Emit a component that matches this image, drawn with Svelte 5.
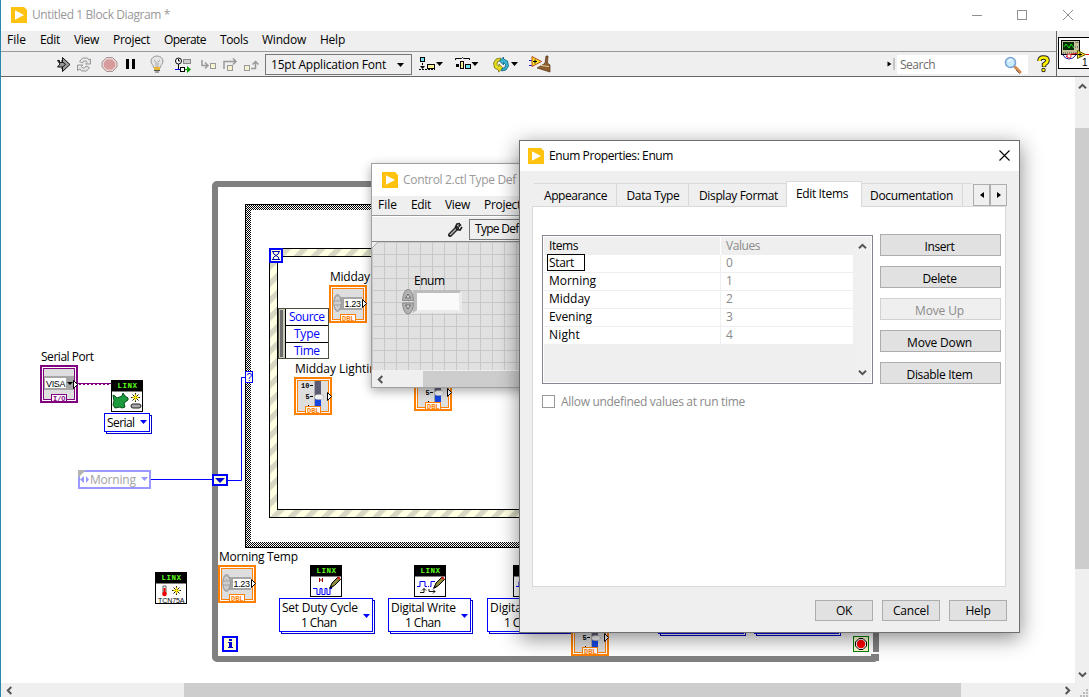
<script>
  const menus = [
    ['File', 19, 33], ['Edit', 20, 34], ['View', 25, 39], ['Project', 37, 51],
    ['Operate', 42, 56], ['Tools', 28, 42], ['Window', 44, 58], ['Help', 25, 40],
  ];
  const items = [['Start', 25], ['Morning', 47], ['Midday', 41], ['Evening', 43], ['Night', 31]];
  const actions = [['Insert', 30], ['Delete', 34], ['Move Up', 49], ['Move Down', 65], ['Disable Item', 66]];

  // Spreads the letters of a label over a given advance width.
  function fit(node, width) {
    const now = node.getBoundingClientRect().width;
    node.style.letterSpacing = (width - now) / node.textContent.length + 'px';
  }
</script>

{#snippet logo()}
  <svg class="logo" width="16" height="16" viewBox="0 0 16 16">
    <path d="M0 0H13L16 3V16H0Z" fill="#ffc20e" />
    <path d="M4 3.2 13 8 4 12.8Z" fill="#fff" />
  </svg>
{/snippet}

{#snippet chevron(dir)}
  <svg width="9" height="9" viewBox="0 0 9 9">
    <path
      d="M1 6.3 4.5 2.8 8 6.3"
      fill="none" stroke="#555" stroke-width="2"
      transform="rotate({{ up: 0, right: 90, down: 180, left: 270 }[dir]} 4.5 4.5)"
    />
  </svg>
{/snippet}

{#snippet terminal(x, y, color, tag)}
  <rect x={x} y={y} width="38" height="38" fill={color} />
  <rect x={x + 2} y={y + 2} width="34" height="34" fill="#fff" />
  <rect x={x + 3.5} y={y + 3.5} width="31" height="31" fill="#dedede" stroke={color} />
  <rect x={x + 11.5} y={y + 29.5} width="15" height="7" fill="#fff" stroke={color} />
  <text class="pix" x={x + 13} y={y + 35.5} font-size="7" fill={color} textLength="12.5">{tag}</text>
{/snippet}

{#snippet outArrow(x, y)}
  <path d="M{x} {y}V{y + 8}L{x + 4} {y + 4}Z" fill="#fff" stroke="#000" />
{/snippet}

{#snippet numeric(x, y)}
  {@render terminal(x, y, '#ff8000', 'DBL')}
  <rect x={x + 11} y={y + 12} width="22" height="13" fill="#a6a6a6" />
  <rect x={x + 15} y={y + 14} width="18" height="9" fill="#fff" />
  <ellipse cx={x + 8.5} cy={y + 18} rx="3.7" ry="8.5" fill="#b8b8b8" stroke="#9a9a9a" />
  <path d="M{x + 6.5} {y + 15}l2-3 2 3M{x + 6.5} {y + 21}l2 3 2-3M{x + 5} {y + 18}h7" fill="none" stroke="#e4e4e4" />
  <text class="num" x={x + 15.5} y={y + 22} font-size="9" textLength="16.5">1.23</text>
  {@render outArrow(x + 33.5, y + 14.5)}
{/snippet}

{#snippet slider(x, y)}
  {@render terminal(x, y, '#ff8000', 'DBL')}
  <rect x={x + 20} y={y + 4} width="1" height="25" fill="#aaa" />
  <rect x={x + 21} y={y + 4} width="6" height="25" fill="#5c5c74" />
  <rect x={x + 21} y={y + 20} width="6" height="9" fill="#1747e0" />
  <ellipse cx={x + 25} cy={y + 20} rx="4.5" ry="2.6" fill="#f4f4f4" stroke="#aaa" stroke-width=".6" />
  <path d="M{x + 16} {y + 8.5}h3M{x + 16} {y + 19.5}h3M{x + 14} {y + 28.5}h1" stroke="#000" />
  <text class="pix" x={x + 7} y={y + 11} font-size="7" fill="#000" textLength="8.5">10</text>
  <text class="pix" x={x + 11.5} y={y + 22} font-size="7" fill="#000">5</text>
  {@render outArrow(x + 33.5, y + 15.5)}
{/snippet}

{#snippet linx(x, y)}
  <rect x={x + 0.5} y={y + 0.5} width="31" height="31" fill="#fff" stroke="#000" />
  <rect x={x} y={y} width="32" height="11.5" fill="#000" />
  <text class="pix" x={x + 6.5} y={y + 8} font-size="7.5" fill="#5cff1a" textLength="19.500">LINX</text>
{/snippet}

{#snippet spark(x, y)}
  <path d="M{x} {y - 4.5}v9M{x - 4.5} {y}h9M{x - 3} {y - 3}l6 6M{x + 3} {y - 3}l-6 6" stroke="#000" stroke-width=".9" />
  <path d="M{x} {y - 3}v6M{x - 3} {y}h6" stroke="#ffe500" stroke-width="1.6" />
{/snippet}

{#snippet pencil(x, y)}
  <path d="M{x + 20} {y + 23}l2-5 6-6 2.5 2.5-6 6Z" fill="#8c8c3c" stroke="#000" />
  <path d="M{x + 27} {y + 13}l2-1.5 1.5 2-1.5 1.5Z" fill="#d01818" />
  <path d="M{x + 19} {y + 24}l1.5-3.5 2 2Z" />
{/snippet}

{#snippet ring(x, y, w, h, ax, ay)}
  <rect x={x + 2.5} y={y + 2.5} width={w} height={h} fill="#fff" stroke="#00c" />
  <rect x={x + 0.5} y={y + 0.5} width={w} height={h} fill="#fff" stroke="#00f" />
  <path d="M{ax} {ay}h7l-3.5 4Z" fill="#00f" />
{/snippet}

<div class="app">
  <header class="titlebar">
    {@render logo()}
    <span class="dim" use:fit={138}>Untitled 1 Block Diagram *</span>
    <svg class="wincontrols" width="104" height="14" viewBox="970 7 104 14" fill="none" stroke="#8f8f8f">
      <path d="M972 14.5h10" />
      <rect x="1017.5" y="9.5" width="9" height="9" />
      <path d="m1063 9 10 10m0-10-10 10" />
    </svg>
  </header>

  <div class="top">
    <div class="bars">
      <nav class="menu">
        {#each menus as [name, w, step]}
          <div class="entry" style:width="{step}px"><span use:fit={w}>{name}</span></div>
        {/each}
      </nav>
      <div class="toolbar">
        <svg viewBox="56 53 20 23">
          <path d="M57.500 60.500h2v2h3v-5l7.500 7-7.500 7v-4.500h-5l2.500-3Z" fill="#999" stroke="#111" />
          <path d="M61 60.500l4.500 4-4.500 4" fill="none" stroke="#111" />
        </svg>
        <svg viewBox="76 53 25 23" fill="#e6e6e6" stroke="#969696">
          <path d="M79.500 61.500l3-3.500h5l1.500 2 1.500-1v5h-5l1.500-1.500-1-1.500h-2l-1.500 2Z" />
          <path d="M89.500 67.500l-3 3.500h-5l-1.500-2-2.500 1.500v-5.500h5.500l-1.500 1.500 1 1.500h2l1.500-2Z" />
        </svg>
        <svg viewBox="101 53 24 23">
          <path d="M106.500 57.500h6l4.500 4.500v5l-4.500 4.500h-6l-4.500-4.500v-5Z" fill="#e6d0d0" stroke="#a89494" />
          <path d="M107 59.500h5l3 3v4l-3 3h-5l-3-3v-4Z" fill="#d89b9b" />
        </svg>
        <svg viewBox="125 53 24 23"><path d="M126 59h3v10h-3zM132 59h3v10h-3z" /></svg>
        <svg viewBox="149 53 26 23">
          <path d="M153.500 67.500c0-3-2.500-3-2.500-6.500a6 5 0 0 1 12 0c0 3.500-2.500 3.500-2.500 6.500Z" fill="#e4e4e4" stroke="#9a9a9a" />
          <path d="M156 67v-5l-2-2m4 7v-5l2-2" fill="none" stroke="#aaa" />
          <path d="M154 67h6v3h-6z" fill="#e5b638" />
          <path d="M154 70.500h6M155 72h4" stroke="#555" />
        </svg>
        <svg viewBox="175 53 25 23">
          <circle cx="178.500" cy="61" r="3" fill="#fff" stroke="#000" />
          <path d="M178.500 59v2h1.500M178.500 64v5" fill="none" stroke="#000" />
          <rect x="183.500" y="59.500" width="7" height="4" fill="#ccc" stroke="#888" />
          <path d="M175 69.500h5" stroke="#00f" />
          <rect x="180.500" y="67.500" width="4" height="4" fill="#fff" stroke="#000" />
          <path d="M185 69.500h3" stroke="#00a000" /><path d="m187 66 4 3.500-4 3.500Z" fill="#009b00" />
        </svg>
        <svg viewBox="200 53 22 23" fill="none" stroke="#999" stroke-width="1.500">
          <path d="M202 60v5.500h6m-3-3 3 3-3 3" /><rect x="210.500" y="63.500" width="5" height="5" fill="#f4f2cf" stroke-width="1" />
        </svg>
        <svg viewBox="222 53 21 23" fill="none" stroke="#999" stroke-width="1.500">
          <path d="M224 69v-7.500h12m-3-3 3 3-3 3" /><rect x="227.500" y="65.500" width="5" height="5" fill="#f4f2cf" stroke-width="1" />
        </svg>
        <svg viewBox="243 53 22 23" fill="none" stroke="#999" stroke-width="1.500">
          <rect x="244.500" y="65.500" width="5" height="5" fill="#f4f2cf" stroke-width="1" /><path d="M251 68.500h4.500v-7m-3 3 3-3 3 3" />
        </svg>
        <div class="font">
          <span use:fit={115}>15pt Application Font</span>
          <svg class="caret" width="7" height="4"><path d="M0 0h7l-3.500 4Z" /></svg>
        </div>
        <svg viewBox="419 53 36 23">
          <rect x="420.500" y="57.500" width="4" height="4" fill="#6fe4f0" stroke="#000" />
          <path d="M422.500 63v5M419 69.500h5m1 0h10" stroke="#000" stroke-dasharray="2 1" /><path d="M420 66h5l-2.500 3Z" />
          <rect x="427.500" y="64.500" width="7" height="4" fill="#f6ee92" stroke="#000" />
          <path d="M436 62h7l-3.500 4Z" />
        </svg>
        <svg viewBox="455 53 38 23">
          <path d="M455.500 60v-1.500h6l1-1 1 1h6V60" fill="none" stroke="#000" />
          <rect x="456" y="64" width="3" height="3" /><rect x="460.500" y="61.500" width="3" height="7" fill="#f6ee92" stroke="#000" />
          <rect x="465.500" y="64.500" width="5" height="4" fill="#6fe4f0" stroke="#000" />
          <path d="M471.500 62h7l-3.500 4Z" />
        </svg>
        <svg viewBox="493 53 36 23">
          <path d="m500.500 58-4.500 1-2.500 4 1 5 4 2v2l4.500-4-4-4v2.500l-2-2 .5-3 3-1Z" fill="#e2dc1e" stroke="#77720c" stroke-width=".8" />
          <path d="m501.500 71 4.500-1 2.500-4-1-5-4-2v-2l-4 4 4 4v-2.500l2 2-.5 3-3 1Z" fill="#36b3cf" stroke="#145f78" stroke-width=".8" />
          <path d="M511 62h7l-3.500 4Z" />
        </svg>
        <svg class="cleanup" viewBox="529 53 26 23">
          <path d="M529 60.500h4m-4 5h4" stroke="#22c" /><path d="m532 56.500 9.500 5-9.500 5Z" fill="#ffe82a" stroke="#b84b16" />
          <path d="M533 61.500h4m-2-2v4" stroke="#000" />
          <path d="M546 56h2l-.5 7 2.500 2v7l-13-4 7-4 1-1Z" fill="#8c5d2c" stroke="#59371a" stroke-width=".7" /><path d="M541 65.500l8 1" stroke="#e6cf9b" />
        </svg>
        <svg class="search-edge" viewBox="886 53 10 23"><path d="m887 61.500 4 2.500-4 2.500Z" /><path d="M893.500 58v12" stroke="#999" /></svg>
        <div class="search">
          <span use:fit={35}>Search</span>
          <svg width="18" height="18" viewBox="1004 55 18 18">
            <path d="m1015 66 5 5" stroke="#d08a4b" stroke-width="3" stroke-linecap="round" /><path d="m1016 69 3.500 3.500" stroke="#6d5b66" />
            <circle cx="1010.500" cy="61.500" r="5" fill="#c9ebfb" stroke="#7aa5d6" stroke-width="1.600" /><path d="M1008 61q1-3 4-2.500" stroke="#fff" fill="none" />
          </svg>
        </div>
        <svg class="help" viewBox="1036 53 16 23" fill="none">
          <path d="M1039.500 61q0-3.500 4-3.500t4 3q0 2-3.500 4V67" stroke="#222" stroke-width="4.500" />
          <circle cx="1043.500" cy="70" r="2.200" fill="#222" />
          <path d="M1039.500 61q0-3.500 4-3.500t4 3q0 2-3.500 4V66.500" stroke="#fff200" stroke-width="2.600" />
          <circle cx="1043.500" cy="70" r="1.300" fill="#fff200" />
        </svg>
      </div>
    </div>
    <div class="vi">
      <svg width="32" height="45" viewBox="1057 31 32 45">
        <rect x="1058.500" y="37.500" width="34" height="31" fill="#fff" stroke="#000" />
        <rect x="1061.500" y="40.500" width="18" height="14" fill="#c6c39c" stroke="#000" />
        <rect x="1063" y="42" width="11" height="8" fill="#052b05" />
        <path d="m1064 47 2-3 3 4 2-4 3 4" fill="none" stroke="#1be01b" />
        <path d="M1076 42v2m2-2v2m-3 3h3M1063 53h13" stroke="#444" stroke-dasharray="1 1" />
        <path d="M1063 55q2 4 6 4t7-4" fill="none" stroke="#2020b0" /><path d="M1066 57q3-3 6-3t5-1m7 1.500h5" fill="none" stroke="#f01010" />
        <circle cx="1069" cy="56" r="2" fill="#fff" stroke="#e22" />
        <path d="m1077.500 50.500 8 4-8 4Z" fill="#ffe72a" stroke="#665c00" />
        <path d="M1078 54.500h4m-2-2v4" stroke="#000" />
        <text class="num" x="1082" y="66" font-size="10">1</text>
      </svg>
    </div>
  </div>

  <main class="work">
    <div class="canvas">
      <svg class="diagram" width="1074" height="606" viewBox="1 77 1074 606">
        <defs>
          <pattern id="check" width="2" height="2" patternUnits="userSpaceOnUse" shape-rendering="crispEdges">
            <rect width="2" height="2" fill="#fff" /><path d="M0 0h1v1h-1zM1 1h1v1h-1z" />
          </pattern>
          <pattern id="stripe" width="12" height="12" patternUnits="userSpaceOnUse" patternTransform="translate(278 0) rotate(45)">
            <rect width="12" height="12" fill="#ffffe1" /><rect width="5.500" height="12" fill="#d7d7c3" />
          </pattern>
        </defs>

        <rect x="215" y="184" width="661" height="475" rx="2" fill="none" stroke="#808080" stroke-width="6" />
        <path d="M873 652h6v2h-6zM877 661h2v1h-2z" fill="#fff" />
        <path d="M871 654h8v7h-8z" fill="#808080" />

        <rect x="248" y="207" width="420" height="338" fill="none" stroke="url(#check)" stroke-width="6" />
        <rect x="245.500" y="204.500" width="425" height="343" fill="none" stroke="#000" />

        <rect x="273.500" y="252.500" width="380" height="261" fill="none" stroke="url(#stripe)" stroke-width="8" />
        <rect x="269.500" y="248.500" width="388" height="269" fill="none" stroke="#000" />
        <rect x="277.500" y="256.500" width="372" height="253" fill="none" stroke="#000" />
        <rect x="270" y="249" width="12" height="13" fill="#ffffe1" stroke="#00f" stroke-width="2" />
        <path d="M272 251.500h8m-8 8h8m-7-8q0 3 3 4q3-1 3-4m-6 8q0-3 3-4q3 1 3 4" fill="none" stroke="#0000b0" />

        <path d="M151 479.500h61M228 480.500h13.500V377.500h4" fill="none" stroke="#00f" />
        <rect x="213" y="475" width="14" height="10" fill="#ffffd5" stroke="#00f" stroke-width="2" />
        <path d="M215 478h10l-5 5Z" fill="#0000d8" />
        <rect x="245.500" y="371.500" width="7" height="11" fill="#ffffe1" stroke="#00f" />
        <text class="num" x="246.500" y="381" font-size="10" fill="#00f">?</text>

        <rect x="278.500" y="308.500" width="50" height="50" fill="#fff" stroke="#4d4d3c" />
        <rect x="279" y="309" width="7" height="49" fill="#c9c9ba" /><rect x="280" y="310" width="3" height="47" fill="#6d6d6d" />
        <path d="M285.500 309v49M286 325.500h42M286 342.500h42" stroke="#000" />
        <g fill="#00f">
          <text x="289" y="321" textLength="36">Source</text>
          <text x="294" y="338" textLength="26">Type</text>
          <text x="294" y="355" textLength="26">Time</text>
        </g>

        <text x="330" y="281" textLength="40">Midday</text>
        <text x="295" y="373" textLength="88">Midday Lighting</text>
        {@render numeric(329, 285)}
        {@render slider(294, 377)}
        {@render slider(414, 373)}

        <text x="41" y="361" textLength="53">Serial Port</text>
        {@render terminal(40, 365, '#800080', 'I/O')}
        <rect x="44" y="376" width="30" height="14" fill="#a6a6a6" />
        <rect x="45" y="378" width="21" height="10" fill="#fff" />
        <text class="num" x="46" y="386.500" font-size="9" textLength="19.500" fill="#000">VISA</text>
        <path d="M67 382h6l-3 3Z" />
        {@render outArrow(73.5, 380.5)}
        <path d="M78 383.500h33" stroke="#800080" stroke-width="1" /><path d="M79 384.500h32" stroke="#800080" stroke-dasharray="2 2" />

        {@render linx(111, 380)}
        <path d="m113 395 2 1 2 2 5-2 1-3 2 3 3 2v2l-4 3 1 4-3 1-2-1-5 1-2-3 1-4Z" fill="#1b9a3e" stroke="#084d1a" />
        {@render spark(135.5, 397.5)}
        <rect x="131" y="404" width="10" height="4" rx="2" fill="#aaa" stroke="#222" />
        {@render ring(104, 413, 45, 18, 140, 420)}
        <text x="107" y="427" textLength="28">Serial</text>

        <rect x="79" y="471" width="71" height="17" fill="#fff" stroke="#99f" stroke-width="2" />
        <path d="M78 470h8l-8 8Z" fill="#b3b3b3" />
        <path d="M84 476v7l-4-3.500ZM86 476v7l3-3.500Z" fill="#99f" /><path d="M141 477h7l-3.500 4Z" fill="#99f" />
        <text x="90" y="484" textLength="46" fill="#a3a3a3">Morning</text>

        {@render linx(155, 572)}
        <rect x="163" y="586" width="3" height="7" fill="#fff" stroke="#000" stroke-width=".6" /><path d="M164.500 588v7" stroke="#e00" stroke-width="2" /><circle cx="164.500" cy="594" r="2.300" fill="#e00" />
        {@render spark(176.5, 590.5)}
        <text class="num" x="158" y="602.500" font-size="7" fill="#000" textLength="26.500">TCN75A</text>

        <text x="219" y="561" textLength="79">Morning Temp</text>
        {@render numeric(218, 565)}

        {@render linx(310, 565)}
        <path d="M313 588.500h4v6h3v-6h2v6h3v-6h2v6h3v-6h2" stroke="#00f" fill="none" />
        <path d="M319.500 578v4m3-4v4m-3-2h3" stroke="#900" />
        {@render pencil(310, 565)}
        {@render ring(279, 598, 93, 33, 363, 614)}
        <text x="282" y="612" textLength="76">Set Duty Cycle</text>
        <text x="301" y="627" textLength="36">1 Chan</text>

        {@render linx(414, 565)}
        <path d="M417 586.500h3v-5h5v5h2m1 0h1m1 0h1v-5h4" stroke="#00f" fill="none" />
        <path d="M420 592.500h4v-4m-2 2 2-2 2 2M429 589v2.500h6m-2-2 2 2-2 2" stroke="#111" fill="none" />
        {@render pencil(414, 565)}
        {@render ring(388, 598, 82, 33, 461, 614)}
        <text x="391" y="612" textLength="65">Digital Write</text>
        <text x="405" y="627" textLength="36">1 Chan</text>

        {@render linx(513, 565)}
        <path d="M516 586.500h3v-5h5" stroke="#00f" fill="none" />
        {@render ring(487, 598, 86, 33, 561, 614)}
        <text x="490" y="612" textLength="66">Digital Read</text>
        <text x="504" y="627" textLength="36">1 Chan</text>

        {@render slider(571, 618)}
        {@render ring(658, 600, 85, 33, 730, 616)}
        {@render ring(754, 600, 84, 33, 828, 616)}

        <rect x="223" y="637" width="14" height="14" fill="#ffffd5" stroke="#00f" stroke-width="2" />
        <path d="M229 639h3v2h-3zM228 642h4v6h-3v-5h-1zM228 647h5v1h-5z" fill="#0000d0" />
        <rect x="853.500" y="636.500" width="15" height="15" fill="#ffffd5" stroke="#008000" />
        <path d="M859 638.500h4l3.500 3.500v4l-3.500 3.500h-4l-3.500-3.500v-4Z" fill="#fff" stroke="#000" /><circle cx="861" cy="644" r="4.200" fill="#f00" />
      </svg>

      <section class="window control">
        <header class="wtitle">{@render logo()}<span class="dim" use:fit={113}>Control 2.ctl Type Def</span></header>
        <nav class="menu">
          {#each menus.slice(0, 4) as [name, w, step]}
            <div class="entry" style:width="{step}px"><span use:fit={w}>{name}</span></div>
          {/each}
        </nav>
        <div class="ctools">
          <svg width="15" height="15" viewBox="448 222 15 15">
            <path d="m450 235 7-7" stroke="#222" stroke-width="4" stroke-linecap="round" /><path d="m450 235 7-7" stroke="#bbb" stroke-width="1.500" />
            <path d="M460 223.500l-3 .5-1.500 3 1.500 2.500 3 .5 2-3M458.500 226.500l2.500-2" fill="none" stroke="#222" stroke-width="1.700" />
          </svg>
          <div class="tdef"><span use:fit={46}>Type Def.</span></div>
        </div>
        <div class="panel">
          <svg width="200" height="128" viewBox="372 242 200 128">
            <path d="M372 242h6l-6 6Z" fill="#eee" /><path d="m372 248 6-6" stroke="#aaa" />
            <text x="414" y="285" textLength="31">Enum</text>
            <rect x="413" y="290" width="49" height="23" fill="#ebebeb" />
            <path d="M413 290h49l-3 3h-42v17l-4 3Z" fill="#bdbdbd" />
            <rect x="417" y="293" width="42" height="17" fill="#fafafa" />
            <path d="M402.500 300.500q1-11 5.500-11t5.500 11ZM402.500 303q1 11 5.500 11t5.500-11Z" fill="#b2b2b2" stroke="#8a8a8a" />
            <path d="M405.500 298h5l-2.500-4ZM405.500 305h5l-2.500 4Z" fill="#ddd" stroke="#555" stroke-width=".8" />
          </svg>
        </div>
        <div class="cscroll"><div class="cbtn">{@render chevron('left')}</div><div class="cthumb"></div></div>
      </section>

      <section class="window dialog">
        <header class="dtitle">
          {@render logo()}<span use:fit={124}>Enum Properties: Enum</span>
          <svg class="close" width="11" height="11" viewBox="0 0 11 11"><path d="m.5.5 10 10m0-10-10 10" stroke="#000" stroke-width="1.100" /></svg>
        </header>
        <div class="dbody">
          <div class="tabs">
            <div class="tab t1"><span use:fit={63}>Appearance</span></div>
            <div class="tab t2"><span use:fit={53}>Data Type</span></div>
            <div class="tab t3"><span use:fit={79}>Display Format</span></div>
            <div class="tab active"><span use:fit={52}>Edit Items</span></div>
            <div class="tab t5"><span use:fit={83}>Documentation</span></div>
            <div class="tab rest"></div>
            <div class="spin"><svg width="4" height="6"><path d="M4 0v6L0 3Z" /></svg></div>
            <div class="spin second"><svg width="4" height="6"><path d="M0 0v6l4-3Z" /></svg></div>
          </div>
          <div class="page">
            <div class="editor">
              <div class="list">
                <div class="grid">
                  <div class="row head"><div class="c1"><span use:fit={29}>Items</span></div><div class="c2"><span use:fit={34}>Values</span></div></div>
                  {#each items as [name, w], i}
                    <div class="row">
                      <div class="c1" class:edit={i === 0}><span use:fit={w}>{name}</span></div>
                      <div class="c2">{i}</div>
                    </div>
                  {/each}
                </div>
                <div class="lscroll">{@render chevron('up')}{@render chevron('down')}</div>
              </div>
              <div class="actions">
                {#each actions as [name, w]}
                  <button disabled={name === 'Move Up'}><span use:fit={w}>{name}</span></button>
                {/each}
              </div>
            </div>
            <div class="allow"><i class="box"></i><span use:fit={184}>Allow undefined values at run time</span></div>
          </div>
          <footer>
            <button><span use:fit={16}>OK</span></button>
            <button><span use:fit={36}>Cancel</span></button>
            <button><span use:fit={25}>Help</span></button>
          </footer>
        </div>
      </section>
    </div>
    <div class="vscroll"><div class="vup">{@render chevron('up')}</div><div class="vthumb"></div><div class="vdown">{@render chevron('down')}</div></div>
  </main>
  <div class="hscroll">
    <div class="hleft">{@render chevron('left')}</div>
    <div class="hthumb"></div>
    <div class="hright">{@render chevron('right')}</div>
    <svg width="9" height="9"><path d="M6 0h2v2H6zM3 3h2v2H3zM6 3h2v2H6zM0 6h2v2H0zM3 6h2v2H3zM6 6h2v2H6z" fill="#bbb" /></svg>
  </div>
</div>

<style>
  :global(body) { margin: 0; overflow: hidden; }
  .app {
    box-sizing: border-box; width: 1089px; height: 697px; overflow: hidden;
    display: flex; flex-direction: column;
    border-left: 1px solid #2b87ad; background: #fff;
    font: 12px/16px "Open Sans", "Noto Sans", sans-serif; color: #000; white-space: nowrap;
  }
  svg { display: block; flex: none; }
  .pix { font-family: "Liberation Mono", monospace; font-weight: bold; }
  .num { font-family: "Liberation Sans", sans-serif; }
  .dim { color: #999; }

  .titlebar { height: 31px; flex: none; display: flex; align-items: center; padding: 0 15px 2px 10px; box-sizing: border-box; }
  .logo { margin-right: 5px; }
  .wincontrols { margin-left: auto; }

  .top { display: flex; flex: none; height: 46px; box-sizing: border-box; background: #efefef; border-bottom: 1px solid #666; }
  .bars { width: 1055px; border-right: 1px solid #666; }
  .menu { display: flex; height: 20px; padding-left: 6px; border-bottom: 1px solid #999; background: #efefef; line-height: 18px; }
  .toolbar {
    height: 23px; margin-top: 1px; padding-left: 55px; display: grid; align-items: start;
    grid-template-columns: 20px 25px 24px 24px 26px 25px 22px 21px 22px 154px 36px 38px 36px 357px 11px 139px 16px;
  }
  .toolbar > svg { height: 23px; width: 100%; }
  .toolbar > .cleanup { width: 26px; }
  .font {
    box-sizing: border-box; width: 147px; height: 21px; margin-top: 1px; padding: 0 7px 0 5px;
    border: 1px solid #777; display: flex; align-items: center; justify-content: space-between; line-height: 18px;
  }
  .search {
    box-sizing: border-box; width: 131px; height: 19px; margin-top: 2px; padding: 0 6px 0 3px; background: #fff; color: #6d6d6d;
    display: flex; justify-content: space-between; align-items: center;
  }
  .vi { width: 32px; background: #efefef; }

  .work { display: flex; height: 606px; flex: none; }
  .canvas { position: relative; width: 1074px; overflow: hidden; background: #fff; }
  .vscroll { width: 14px; background: #efefef; display: flex; flex-direction: column; align-items: center; }
  .vup { height: 51px; padding-top: 5px; box-sizing: border-box; }
  .vthumb { width: 14px; height: 441px; background: #cdcdcd; }
  .vdown { margin-top: 101px; }
  .hscroll { height: 14px; flex: none; display: flex; align-items: center; background: #efefef; }
  .hleft { box-sizing: border-box; width: 183px; flex: none; padding-left: 4px; }
  .hthumb { width: 777px; flex: none; height: 14px; background: #cdcdcd; }
  .hright { box-sizing: border-box; width: 117px; flex: none; padding-left: 102px; }
  .hscroll > svg { margin: 6px 0 0 2px; }

  .window { position: absolute; box-sizing: border-box; background: #efefef; }
  .control { left: 370px; top: 86px; width: 220px; height: 225px; border: 1px solid #a0a0a0; box-shadow: 0 3px 10px #0005; display: flex; flex-direction: column; }
  .wtitle { height: 32px; display: flex; align-items: center; background: #fff; padding-left: 10px; box-sizing: border-box; }
  .control .menu { height: 19px; line-height: 18px; }
  .ctools { height: 26px; box-sizing: border-box; padding-left: 76px; display: flex; align-items: center; gap: 6px; border-bottom: 1px solid #888; border-top: 1px solid #fff; }
  .tdef { width: 100px; height: 19px; border: 1px solid #777; padding-left: 5px; line-height: 18px; flex: none; }
  .panel {
    height: 128px; overflow: hidden; background-color: #e1e1e1;
    background-image: linear-gradient(90deg, #c8c8c8 1px, transparent 1px), linear-gradient(#c8c8c8 1px, transparent 1px);
    background-size: 12px 12px; background-position: 0 0;
  }
  .cscroll { height: 16px; display: flex; margin-top: auto; }
  .cbtn { width: 51px; padding: 4px 0 0 4px; box-sizing: border-box; }
  .cthumb { flex: 1; background: #cdcdcd; }

  .dialog { left: 518px; top: 63px; width: 501px; height: 493px; border: 1px solid #6e6e6e; box-shadow: 0 5px 20px #0007; display: flex; flex-direction: column; }
  .dtitle { height: 30px; flex: none; display: flex; align-items: center; background: #fff; padding: 0 9px 0 8px; }
  .close { margin: -2px 0 0 auto; }
  .dbody { padding: 10px 13px 0 12px; }
  .tabs { display: flex; align-items: flex-end; height: 26px; padding-left: 2px; margin-right: -1px; }
  .tab { box-sizing: border-box; height: 23px; border-top: 1px solid #d9d9d9; border-right: 1px solid #d9d9d9; line-height: 23px; text-align: center; margin-bottom: 1px; }
  .t1 { width: 83px; padding-left: 1px; }
  .t2 { width: 72px; padding-left: 1px; }
  .t3 { width: 97px; border-right: 0; padding-left: 2px; }
  .active { width: 76px; height: 26px; margin-bottom: 0; background: #fff; border-left: 1px solid #d9d9d9; padding-right: 4px; position: relative; z-index: 1; line-height: 23px; }
  .t5 { width: 101px; padding-right: 1px; }
  .rest { width: 9px; border-right: 0; }
  .spin { box-sizing: border-box; width: 17px; height: 22px; margin: 0 0 1px 1px; border: 1px solid #adadad; display: grid; place-items: center; }
  .second { margin-left: 0; }
  .page { box-sizing: border-box; height: 381px; border: 1px solid #d9d9d9; background: #fff; margin-top: -1px; padding: 27px 4px 0 9px; }
  .editor { display: flex; justify-content: space-between; }
  .list { box-sizing: border-box; width: 331px; height: 149px; margin-top: 1px; border: 1px solid #828790; padding: 1px; display: flex; justify-content: space-between; }
  .grid { width: 310px; background: #efefef; }
  .row { display: flex; width: 309px; height: 17px; border-bottom: 1px solid #efefef; background: #fff; line-height: 16px; }
  .head { height: 18px; border: 0; background: #efefef; line-height: 17px; }
  .c1 { box-sizing: border-box; width: 176px; padding-left: 5px; }
  .c2 { box-sizing: border-box; flex: 1; border-left: 1px solid #efefef; padding-left: 5px; color: #8a8a8a; }
  .head .c2 { border-color: #fff; }
  .edit { width: 38px; height: 17px; border: 1px solid #000; margin: -1px 135px 0 3px; padding-left: 1px; }
  .lscroll { width: 17px; background: #f0f0f0; display: flex; flex-direction: column; justify-content: space-between; align-items: center; padding: 5px 0; box-sizing: border-box; }
  .actions { display: flex; flex-direction: column; gap: 10px; }
  button { box-sizing: border-box; width: 121px; height: 22px; padding: 0; border: 1px solid #adadad; background: #e1e1e1; color: #000; font: inherit; line-height: 20px; }
  .actions button { padding: 2px 2px 0 0; }
  button:disabled { border-color: #d2d2d2; background: #efefef; color: #8b8b8b; }
  .allow { display: flex; align-items: center; gap: 6px; margin-top: 9px; color: #8b8b8b; }
  .allow span { padding-top: 1px; }
  .box { box-sizing: border-box; width: 13px; height: 13px; border: 1px solid #999; }
  footer { display: flex; justify-content: flex-end; gap: 9px; margin-top: 13px; margin-right: -1px; }
  footer button { width: 58px; height: 21px; line-height: 19px; }
</style>
